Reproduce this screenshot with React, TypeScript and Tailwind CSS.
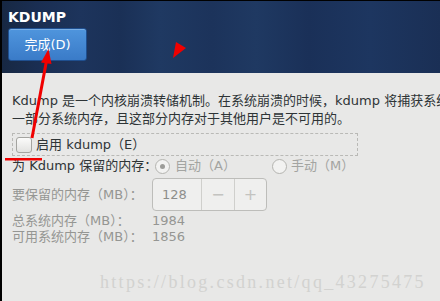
export default function App() {
  const font = "font-['DejaVu_Sans','Noto_Sans_CJK_SC',sans-serif]";

  return (
    <div className={`relative h-[301px] w-[440px] overflow-hidden bg-black pl-[2px] pt-[1px] ${font}`}>
      <div className="flex h-full flex-col bg-[#e8e8e7]">
        {/* header */}
        <div className="h-[72px] shrink-0 bg-[linear-gradient(90deg,#172843_0%,#1a2e52_8%,#1d345c_18%,#1a3056_27%,#1f3962_36%,#1c335b_48%,#1f3962_58%,#1a3058_70%,#1d3660_84%,#1a2f55_100%)] px-[6px] pt-[8px]">
          <div className="text-[14px] font-bold leading-[16px] text-white">KDUMP</div>
          <button className="mt-[3px] flex h-[33px] w-[79px] items-center justify-center rounded-[3px] border border-[#1f4f8f] bg-[linear-gradient(180deg,#4f95dd,#3a7bc8)] text-[13px] text-white shadow-[inset_0_1px_0_rgba(255,255,255,0.25)]">
            完成(D)
          </button>
        </div>

        {/* body */}
        <div className="pl-[10px] pt-[19px] text-[13px] text-[#2e3436]">
          <p className="whitespace-nowrap leading-[18px]">
            Kdump 是一个内核崩溃转储机制。在系统崩溃的时候，kdump 将捕获系统信息
            <br />
            一部分系统内存，且这部分内存对于其他用户是不可用的。
          </p>

          <div className="mt-[5px] flex h-[23px] w-[346px] items-center border border-dashed border-[#b9b9b6] pl-[3px]">
            <span className="h-[16px] w-[16px] rounded-[3px] border border-[#a4a4a0] bg-[linear-gradient(180deg,#fbfbfa,#e2e2e0)]" />
            <span className="ml-[4px] leading-[16px]">启用 kdump（E）</span>
          </div>

          <div className="flex h-[20px] items-center whitespace-nowrap">
            <span className="w-[143px]">为 Kdump 保留的内存：</span>
            <span className="flex h-[15px] w-[15px] items-center justify-center rounded-full border border-[#b4b4b0] bg-[#f2f2f1]">
              <span className="h-[5px] w-[5px] rounded-full bg-[#9c9c99]" />
            </span>
            <span className="ml-[5px] w-[97px] text-[#a3a4a1]">自动（A）</span>
            <span className="h-[15px] w-[15px] rounded-full border border-[#b4b4b0] bg-[#f2f2f1]" />
            <span className="ml-[4px] text-[#a3a4a1]">手动（M）</span>
          </div>

          <div className="mt-[2px] flex items-center text-[#959693]">
            <span className="w-[140px] whitespace-nowrap">要保留的内存（MB）：</span>
            <div className="flex h-[33px] w-[115px] overflow-hidden rounded-[4px] border border-[#bdbdba] bg-[#efefee]">
              <span className="flex w-[48px] items-center pl-[9px] text-[#8d8e8b]">128</span>
              <span className="flex w-[33px] items-center justify-center border-l border-[#cfcfcc] text-[16px] text-[#c3c3c0]">−</span>
              <span className="flex flex-1 items-center justify-center border-l border-[#cfcfcc] text-[16px] text-[#c3c3c0]">+</span>
            </div>
          </div>

          <div className="mt-[2px] flex leading-[16px] text-[#959693]">
            <span className="w-[140px] whitespace-nowrap">总系统内存（MB）：</span>
            <span>1984</span>
          </div>
          <div className="flex leading-[16px] text-[#959693]">
            <span className="w-[140px] whitespace-nowrap">可用系统内存（MB）：</span>
            <span>1856</span>
          </div>

          <div className="mt-[27px] whitespace-nowrap pl-[88px] font-['Liberation_Serif',serif] text-[18px] leading-[20px] tracking-[2.3px] text-[#d2d2d0]">
            https://blog.csdn.net/qq_43275475
          </div>
        </div>
      </div>

      {/* red annotations */}
      <svg className="absolute left-0 top-0" width="440" height="301" viewBox="0 0 440 301">
        <line x1="32" y1="138" x2="46.3" y2="62" stroke="#f00000" strokeWidth="3" />
        <polygon points="48.5,49 51.5,64 41,62.5" fill="#f00000" />
        <rect x="5" y="158" width="37" height="2.5" fill="#f00000" />
        <polygon points="176,42 186,48 173,58" fill="#f00000" />
      </svg>
    </div>
  );
}
